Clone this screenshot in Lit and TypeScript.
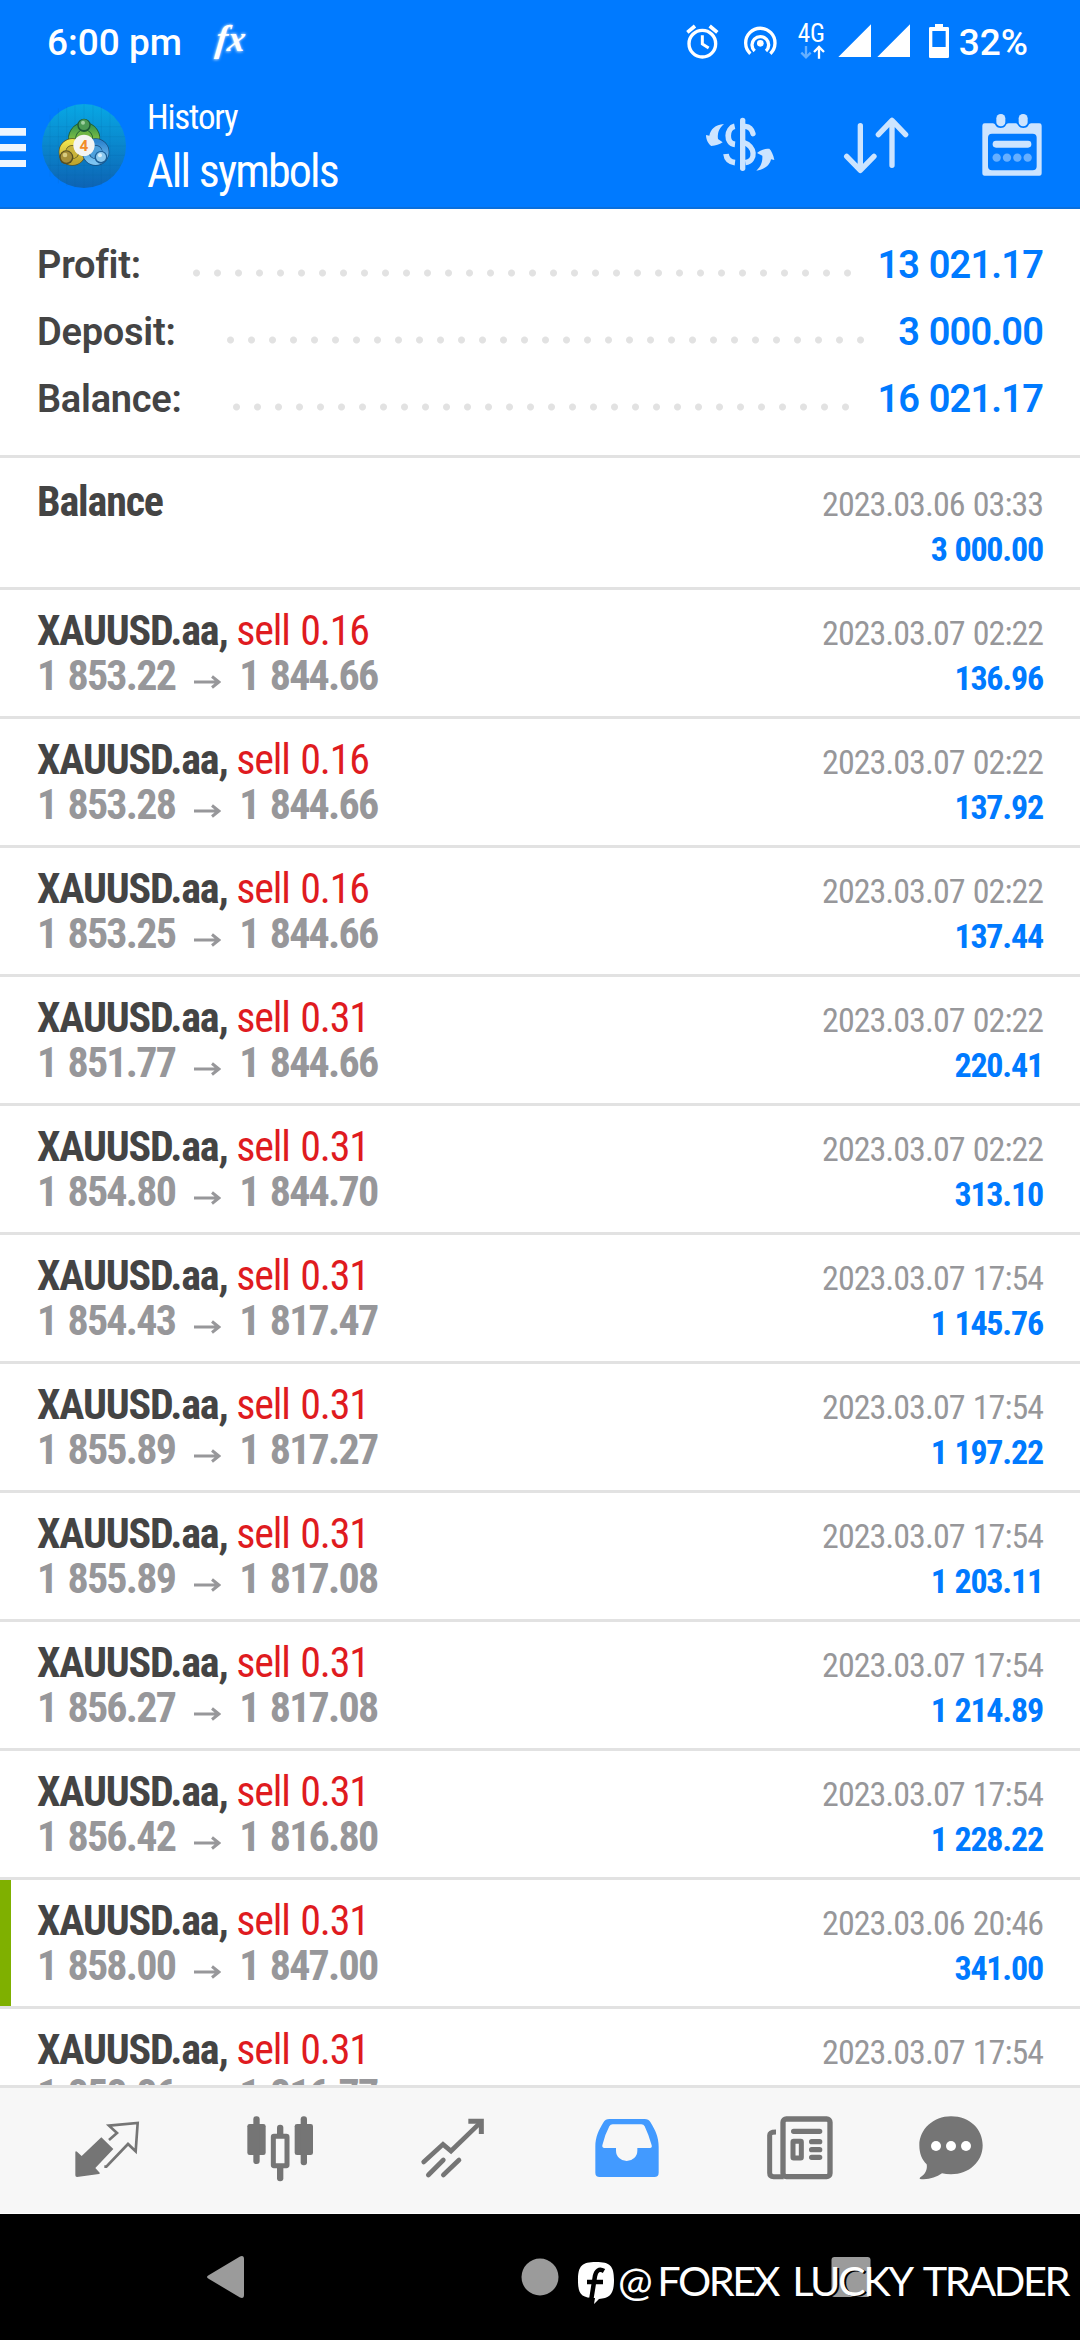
import { LitElement, html, svg, css } from "lit";
import { customElement, property } from "lit/decorators.js";

interface Deal {
  volume: string;
  open: string;
  close: string;
  time: string;
  profit: string;
  marked?: boolean;
}

const deals: Deal[] = [
  { volume: "0.16", open: "1 853.22", close: "1 844.66", time: "2023.03.07 02:22", profit: "136.96" },
  { volume: "0.16", open: "1 853.28", close: "1 844.66", time: "2023.03.07 02:22", profit: "137.92" },
  { volume: "0.16", open: "1 853.25", close: "1 844.66", time: "2023.03.07 02:22", profit: "137.44" },
  { volume: "0.31", open: "1 851.77", close: "1 844.66", time: "2023.03.07 02:22", profit: "220.41" },
  { volume: "0.31", open: "1 854.80", close: "1 844.70", time: "2023.03.07 02:22", profit: "313.10" },
  { volume: "0.31", open: "1 854.43", close: "1 817.47", time: "2023.03.07 17:54", profit: "1 145.76" },
  { volume: "0.31", open: "1 855.89", close: "1 817.27", time: "2023.03.07 17:54", profit: "1 197.22" },
  { volume: "0.31", open: "1 855.89", close: "1 817.08", time: "2023.03.07 17:54", profit: "1 203.11" },
  { volume: "0.31", open: "1 856.27", close: "1 817.08", time: "2023.03.07 17:54", profit: "1 214.89" },
  { volume: "0.31", open: "1 856.42", close: "1 816.80", time: "2023.03.07 17:54", profit: "1 228.22" },
  { volume: "0.31", open: "1 858.00", close: "1 847.00", time: "2023.03.06 20:46", profit: "341.00", marked: true },
  { volume: "0.31", open: "1 858.86", close: "1 816.77", time: "2023.03.07 17:54", profit: "1 128.86" },
];

const totals = [
  { label: "Profit:", value: "13 021.17", start: 149, dots: 32 },
  { label: "Deposit:", value: "3 000.00", start: 183, dots: 31 },
  { label: "Balance:", value: "16 021.17", start: 189, dots: 30 },
];

@customElement("status-bar")
class StatusBar extends LitElement {
  static styles = css`
    :host {
      display: flex;
      height: 84px;
      align-items: flex-start;
      padding: 0 52px 0 47px;
      box-sizing: border-box;
      color: #fff;
      font: 500 37px/86px Roboto, sans-serif;
    }
    svg { display: block; height: 84px; }
    .fx { width: 50px; margin-left: 22px; }
    .right { margin-left: auto; display: flex; }
    .alarm { width: 36px; }
    .spot { width: 36px; margin-left: 22px; }
    .net { width: 36px; margin-left: 17px; }
    .signal { width: 75px; margin-left: 6px; }
    .battery { width: 24px; margin-left: 15px; }
    .level { margin-left: 8px; }
    .fxt { font: italic 700 112px "Liberation Serif", serif; }
    .g { font-family: Roboto, sans-serif; font-weight: 400; font-size: 78px; font-stretch: 75%; }
  `;
  render() {
    return html`
      <span>6:00 pm</span>
      <svg class="fx" viewBox="615 0 150 252">
        <defs><filter id="glow" x="-30%" y="-30%" width="160%" height="160%"><feGaussianBlur stdDeviation="5" /></filter></defs>
        <g transform="translate(18 0) skewX(-7)">
          <text class="fxt" x="648" y="154" fill="#fff" filter="url(#glow)" textLength="88" lengthAdjust="spacingAndGlyphs">fx</text>
          <text class="fxt" x="648" y="154" fill="#fff" textLength="88" lengthAdjust="spacingAndGlyphs">fx</text>
        </g>
      </svg>
      <div class="right">
        <svg class="alarm" viewBox="66 0 108 252" fill="none" stroke="#fff">
          <circle cx="121" cy="131" r="40" stroke-width="10" />
          <path d="M121 106V132L140 144" stroke-width="9" />
          <path d="M76 97L99 78M166 97L143 78" stroke-width="11" />
        </svg>
        <svg class="spot" viewBox="240 0 108 252" fill="none" stroke="#fff" stroke-width="10">
          <circle cx="295" cy="130" r="10" fill="#fff" stroke="none" />
          <path d="M278 153A25 25 0 1 1 312 153" />
          <path d="M265 161A44 44 0 1 1 325 161" />
        </svg>
        <svg class="net" viewBox="399 0 108 252">
          <text class="g" x="407" y="126" fill="#fff" textLength="82" lengthAdjust="spacingAndGlyphs">4G</text>
          <path d="M432 138V168M418 158L432 172L446 158" fill="none" stroke="#66b0ff" stroke-width="7" />
          <path d="M471 176V144M456 156L471 141L486 156" fill="none" stroke="#fff" stroke-width="7" />
        </svg>
        <svg class="signal" viewBox="525 0 225 252" fill="#fff">
          <path d="M627 73V171H529ZM744 73V171H646Z" />
        </svg>
        <svg class="battery" viewBox="795 0 72 252">
          <path fill="#fff" fill-rule="evenodd" d="M819 72H843V81H857Q861 81 861 85V170Q861 174 857 174H805Q801 174 801 170V85Q801 81 805 81H819ZM811 93V141H851V93Z" />
        </svg>
        <span class="level">32%</span>
      </div>
    `;
  }
}

@customElement("title-bar")
class TitleBar extends LitElement {
  static styles = css`
    :host {
      display: flex;
      height: 125px;
      box-sizing: border-box;
      color: #fff;
      padding-right: 18px;
      border-bottom: 2px solid #0a6fdc;
      font-family: Roboto, sans-serif;
      font-stretch: 75%;
    }
    svg { display: block; height: 126px; flex: none; }
    .menu { width: 126px; }
    .names { margin-left: 21px; padding-top: 14px; display: flex; flex-direction: column; }
    .small { font-size: 35px; line-height: 40px; letter-spacing: -1.200px; }
    .big { font-size: 46px; line-height: 54px; margin-top: 6px; letter-spacing: -1.850px; word-spacing: 1px; }
    .actions { margin-left: auto; display: flex; gap: 36px; }
    .actions svg { width: 100px; }
    .four { font: 700 46px Roboto, sans-serif; }
  `;
  render() {
    return html`
      <svg class="menu" viewBox="0 252 378 378">
        <defs>
          <linearGradient id="sky" x1="0" y1="0" x2="0" y2="1"><stop offset="0" stop-color="#08a8e4" /><stop offset=".5" stop-color="#0a86cc" /><stop offset="1" stop-color="#0d63b4" /></linearGradient>
          <linearGradient id="gr" x1="0" y1="0" x2="0" y2="1"><stop offset="0" stop-color="#3f9a4d" /><stop offset="1" stop-color="#8cc63f" /></linearGradient>
          <linearGradient id="ye" x1="0" y1="0" x2="0" y2="1"><stop offset="0" stop-color="#f0e24e" /><stop offset="1" stop-color="#bfa630" /></linearGradient>
          <linearGradient id="bl" x1="0" y1="0" x2="0" y2="1"><stop offset="0" stop-color="#2f86cf" /><stop offset="1" stop-color="#7cc4f2" /></linearGradient>
        </defs>
        <path fill="#eef6ff" d="M0 384H78V407H0ZM0 432H78V454H0ZM0 480H78V501H0Z" />
        <circle cx="252" cy="438" r="126" fill="url(#sky)" />
        <path d="M150 344V530M175 325V550M200 320V558M225 315V562M252 312V564M279 315V562M304 320V556M330 340V536M142 380H364M130 410H374M128 438H376M130 466H374M142 496H362M165 525H340" stroke="#0a5f9c" stroke-opacity=".2" stroke-width="2" />
        <path d="M222 419A33 36 0 1 1 284 419Z" fill="#6fb544" />
        <circle cx="217" cy="456" r="29" fill="#c9b33a" />
        <circle cx="289" cy="456" r="29" fill="#4d9fdb" />
        <path d="M219 428A36 36 0 1 1 286 428" fill="none" stroke="#1f5c33" stroke-width="24" />
        <path d="M219 428A36 36 0 1 1 286 428" fill="none" stroke="url(#gr)" stroke-width="19" />
        <circle cx="217" cy="456" r="30" fill="none" stroke="#5c5620" stroke-width="22" />
        <circle cx="217" cy="456" r="30" fill="none" stroke="url(#ye)" stroke-width="18" />
        <circle cx="287" cy="456" r="30" fill="none" stroke="#174d7d" stroke-width="22" />
        <circle cx="287" cy="456" r="30" fill="none" stroke="url(#bl)" stroke-width="18" />
        <circle cx="252" cy="376" r="20" fill="#1d5a35" /><circle cx="252" cy="374" r="16" fill="#4c9a55" /><circle cx="249" cy="368" r="6" fill="#9fd0a0" />
        <circle cx="199" cy="472" r="21" fill="#574f22" /><circle cx="199" cy="471" r="17" fill="#a58f3a" /><circle cx="195" cy="465" r="7" fill="#d9cc80" />
        <circle cx="303" cy="472" r="19" fill="#1b5e97" /><circle cx="303" cy="471" r="15" fill="#8cc9ee" /><circle cx="300" cy="466" r="6" fill="#d5eefc" />
        <circle cx="252" cy="436" r="32" fill="#f4f4f2" />
        <text class="four" x="252" y="453" text-anchor="middle" fill="#f28c28">4</text>
      </svg>
      <div class="names">
        <span class="small">History</span>
        <span class="big">All symbols</span>
      </div>
      <div class="actions">
        <svg viewBox="90 252 300 378" fill="none" stroke="#cce4ff" stroke-width="16">
          <path d="M248 361V505" stroke-linecap="round" />
          <path d="M224 379C200 384 196 430 225 433M225 488C208 486 200 478 198 462" stroke-width="17" />
          <path d="M256 379C268 380 276 388 279 401" stroke-linecap="round" />
          <path d="M250 427C286 438 290 482 256 488" />
          <path fill="#cce4ff" stroke="none" d="M192 372C165 374 152 388 148 407L138 405C138 420 146 432 154 438C168 437 178 434 188 427L174 417C172 400 176 386 192 372Z" />
          <path fill="#cce4ff" stroke="none" d="M289 512C316 508 330 494 333 478L343 480C340 464 334 452 328 446C312 446 302 451 291 459L307 467C308 484 304 498 289 512Z" />
        </svg>
        <svg viewBox="498 252 300 378" fill="none" stroke="#cce4ff" stroke-width="16" stroke-linecap="round" stroke-linejoin="round">
          <path d="M601 377V510M560 469L601 511L642 469" />
          <path d="M696 496V362M655 404L696 361L737 404" />
        </svg>
        <svg viewBox="906 252 300 378" fill="#cce4ff">
          <path fill-rule="evenodd" d="M974 370H998C1003 370 1006 374 1008 378C1012 386 1032 386 1036 378C1038 374 1041 370 1046 370H1066C1071 370 1074 374 1076 378C1080 386 1100 386 1104 378C1106 374 1109 370 1114 370H1138Q1145 370 1145 377V519Q1145 527 1138 527H974Q967 527 967 519V377Q967 370 974 370ZM996 401Q984 401 984 413V499Q984 511 996 511H1118Q1130 511 1130 499V413Q1130 401 1118 401Z" />
          <rect x="1009" y="342" width="27" height="37" rx="13" />
          <rect x="1076" y="342" width="27" height="37" rx="13" />
          <rect x="998" y="422" width="116" height="21" rx="10" />
          <g opacity=".5"><circle cx="1010" cy="473" r="12.500" /><circle cx="1041" cy="473" r="12.500" /><circle cx="1072" cy="473" r="12.500" /><circle cx="1103" cy="473" r="12.500" /></g>
        </svg>
      </div>
    `;
  }
}

@customElement("totals-panel")
class TotalsPanel extends LitElement {
  static styles = css`
    :host {
      display: block;
      height: 249px;
      box-sizing: border-box;
      padding: 23px 37px 0 37px;
      border-bottom: 3px solid #e2e2e2;
      font: 600 38px/67px Roboto, sans-serif;
    }
    .row { display: flex; height: 67px; }
    .label { color: #444; letter-spacing: -0.250px; }
    .dots {
      height: 20px;
      margin-top: 31px;
      background: radial-gradient(circle at 10.500px 10px, #e2e2e2 3px, rgba(226, 226, 226, 0) 4px) 0 0 / 21px 20px repeat-x;
    }
    .value { margin-left: auto; color: #007aff; font-weight: 650; letter-spacing: -0.850px; word-spacing: 1px; }
  `;
  render() {
    return html`${totals.map(
      (t) => html`<div class="row">
        <span class="label" style="width:${t.start}px">${t.label}</span>
        <span class="dots" style="width:${t.dots * 21}px"></span>
        <span class="value">${t.value}</span>
      </div>`
    )}`;
  }
}

@customElement("deal-row")
class DealRow extends LitElement {
  @property({ attribute: false }) deal?: Deal;
  static styles = css`
    :host {
      display: block;
      flex: none;
      border-bottom: 3px solid #e2e2e2;
      font-family: Roboto, sans-serif;
      font-stretch: 75%;
    }
    .row { display: flex; justify-content: space-between; height: 126px; box-sizing: border-box; padding: 18px 37px 0 37px; }
    .marked { padding-left: 26px; border-left: 11px solid #7fb000; }
    .balance { height: 129px; padding-top: 21px; }
    .left, .right { display: flex; flex-direction: column; }
    .left { font-size: 42px; line-height: 45px; font-weight: 700; }
    .right { font-size: 34px; line-height: 45px; align-items: flex-end; padding-top: 3px; }
    .name { color: #444; white-space: pre; letter-spacing: -1.150px; }
    .side { color: #df1b1f; font-weight: 400; letter-spacing: -1.150px; word-spacing: 2px; }
    .prices { color: #97979a; display: flex; letter-spacing: -1.750px; word-spacing: 3px; }
    .arrow { width: 28px; height: 20px; margin: 19px 18px 0 18px; }
    .time { color: #97979a; font-weight: 400; letter-spacing: -0.980px; word-spacing: 1.500px; }
    .profit { color: #007aff; font-weight: 700; letter-spacing: -1.200px; word-spacing: 1px; }
  `;
  render() {
    const d = this.deal;
    if (!d) {
      return html`<div class="row balance">
        <div class="left"><span class="name">Balance</span></div>
        <div class="right"><span class="time">2023.03.06 03:33</span><span class="profit">3 000.00</span></div>
      </div>`;
    }
    return html`<div class="row ${d.marked ? "marked" : ""}">
      <div class="left">
        <span class="name">XAUUSD.aa, <span class="side">sell ${d.volume}</span></span>
        <span class="prices">
          <span>${d.open}</span>
          <svg class="arrow" viewBox="0 0 28 20" fill="none" stroke="#97979a" stroke-width="3"><path d="M1 10H26M19 4.500L26 10L19 15.500" /></svg>
          <span>${d.close}</span>
        </span>
      </div>
      <div class="right"><span class="time">${d.time}</span><span class="profit">${d.profit}</span></div>
    </div>`;
  }
}

const tabs = [
  svg`<g fill="#757575"><path d="M185 172L221 207L167 264L180 278Q182 281 178 282L112 291Q107 291 107 286V216Q108 212 112 215L126 228Z"/></g>
    <path d="M208 180L232 159L208 137L294 129L288 214L265 192L200 260H194" fill="none" stroke="#757575" stroke-width="8"/>`,
  svg`<g fill="#757575"><rect x="622" y="132" width="55" height="93" rx="7"/><rect x="764" y="132" width="55" height="93" rx="7"/>
    <rect x="640" y="109" width="19" height="143" rx="9"/><rect x="782" y="109" width="19" height="147" rx="9"/><rect x="711" y="134" width="19" height="40" rx="9"/><rect x="711" y="250" width="19" height="54" rx="9"/></g>
    <rect x="700" y="169" width="41" height="88" rx="2" fill="#f7f7f7" stroke="#757575" stroke-width="15"/>`,
  svg`<g fill="none" stroke="#757575" stroke-width="14"><path d="M1152 246L1210 193L1234 213L1322 128" stroke-linecap="round"/><path d="M1286 124H1325V162" stroke-width="15"/>
    <path d="M1166 285L1211 240M1211 285L1258 240" stroke-linecap="round"/></g>`,
  svg`<path fill="#429aff" fill-rule="evenodd" d="M148 117H254Q266 117 271 126C286 150 296 172 296 200V278Q296 291 283 291H119Q106 291 106 278V200C106 172 116 150 131 126Q136 117 148 117ZM158 133Q151 133 148 139Q134 165 127 196Q126 204 133 204H168V212A32 31 0 0 0 232 212V204H270Q277 204 275 196Q266 164 254 139Q251 133 244 133Z"/>`,
  svg`<g fill="none" stroke="#757575"><rect x="674" y="117" width="141" height="173" rx="10" stroke-width="16"/><path d="M653 156Q634 156 634 166V279Q634 290 646 290H676" stroke-width="15"/><rect x="704" y="184" width="25" height="50" rx="2" stroke-width="15"/>
    <path d="M706 154H784M760 185H784M760 209H784M760 232H784" stroke-width="16" stroke-linecap="round"/></g>`,
  svg`<path fill="#757575" d="M1173 109C1230 109 1268 148 1268 196C1268 245 1228 283 1173 283C1163 283 1154 282 1146 280C1128 293 1104 300 1080 297Q1077 295 1081 292C1096 283 1103 268 1100 253C1086 240 1078 220 1078 196C1078 148 1120 109 1173 109Z"/>
    <g fill="#fff"><circle cx="1128" cy="198" r="15"/><circle cx="1173" cy="198" r="15"/><circle cx="1218" cy="198" r="15"/></g>`,
];
const tabCenters = [202, 720, 1240, 201, 725, 1173];

@customElement("tab-bar")
class TabBar extends LitElement {
  static styles = css`
    :host {
      display: grid;
      grid-template-columns: repeat(6, 173.400px);
      justify-content: center;
      justify-items: center;
      flex: none;
      height: 129px;
      box-sizing: border-box;
      border-top: 3px solid #e2e2e2;
      border-bottom: 1px solid #fff;
      background: #f7f7f7;
    }
    svg { display: block; width: 100px; height: 126px; }
    svg:last-child { margin-right: 45px; }
  `;
  render() {
    return html`${tabs.map((t, i) => html`<svg viewBox="${tabCenters[i] - 150} 24 300 378">${t}</svg>`)}`;
  }
}

@customElement("system-keys")
class SystemKeys extends LitElement {
  static styles = css`
    :host { display: flex; position: relative; flex: none; height: 126px; background: #000; }
    .keys { display: block; width: 1080px; height: 126px; }
    .credit {
      position: absolute;
      left: 577px;
      top: 0;
      display: flex;
      color: #fff;
      font: 400 41.500px/50px Lato, sans-serif;
      letter-spacing: -2.500px;
      word-spacing: 6px;
      padding-top: 41px;
      white-space: nowrap;
      text-shadow: 2px 1px 0 #000;
    }
    .badge { width: 38px; height: 44px; margin: 6px 3px 0 0; }
    .at { margin-right: 7px; }
  `;
  render() {
    return html`
      <svg class="keys" viewBox="0 2214 1080 126" fill="#9b9b9b">
        <path d="M209 2275L240 2256.500Q244 2255 244 2259V2295Q244 2299 240 2297.500L209 2279Q205 2277 209 2275Z" />
        <circle cx="540" cy="2277" r="18.500" />
        <rect x="831.500" y="2257" width="39" height="40" rx="3" />
      </svg>
      <div class="credit">
        <svg class="badge" viewBox="0 0 38 44">
          <path fill="#fff" d="M19 1C33 1 37 5 37 19C37 33 33 37 22 38L17 43L18 37C4 37 1 33 1 19C1 5 5 1 19 1Z" />
          <path d="M27 10C22 7 19 10 18 15L14 40M10 21H26" fill="none" stroke="#000" stroke-width="4.500" />
        </svg>
        <span><span class="at">@</span>FOREX LUCKY TRADER</span>
      </div>
    `;
  }
}

@customElement("app-root")
class AppRoot extends LitElement {
  static styles = css`
    :host { display: flex; flex-direction: column; width: 1080px; height: 2340px; overflow: hidden; background: #fff; }
    .top { background: #007aff; height: 209px; flex: none; }
    .list { flex: 1; min-height: 0; overflow: hidden; display: flex; flex-direction: column; }
  `;
  render() {
    return html`
      <div class="top"><status-bar></status-bar><title-bar></title-bar></div>
      <totals-panel></totals-panel>
      <div class="list">
        <deal-row></deal-row>
        ${deals.map((d) => html`<deal-row .deal=${d}></deal-row>`)}
      </div>
      <tab-bar></tab-bar>
      <system-keys></system-keys>
    `;
  }
}
